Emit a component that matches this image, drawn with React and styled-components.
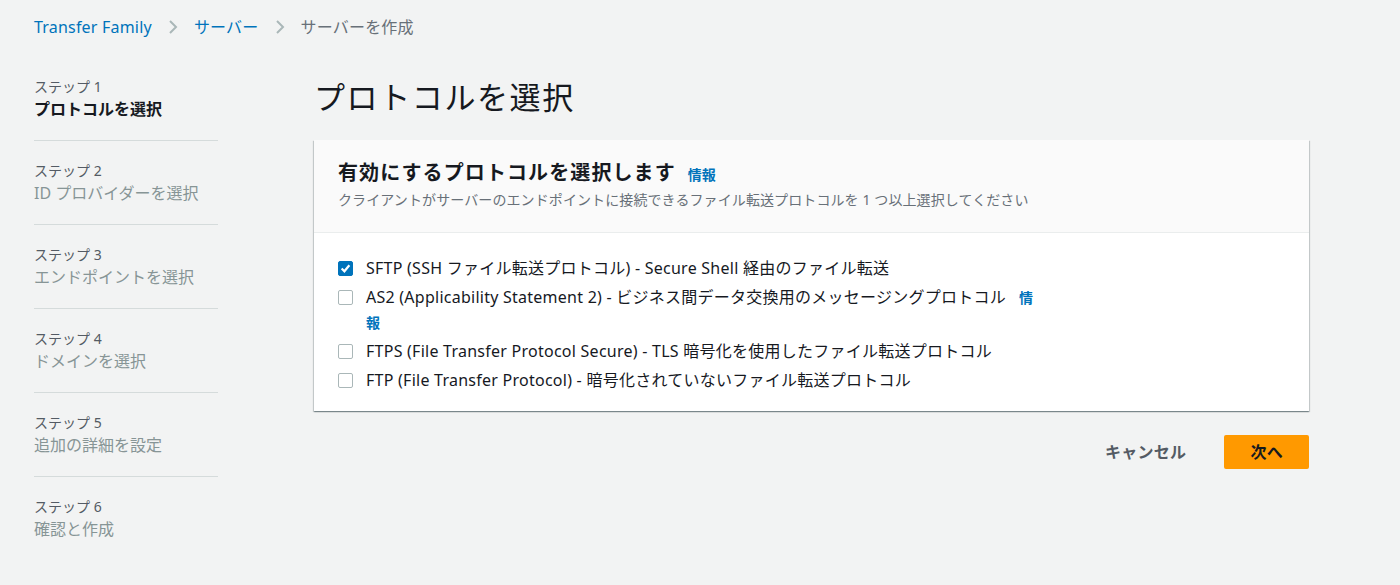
import React from "react";
import styled, { createGlobalStyle } from "styled-components";

const GlobalStyle = createGlobalStyle`
    html, body {
        margin: 0;
        padding: 0;
        background: #f2f3f3;
    }
    body {
        font-family: "Noto Sans", "Noto Sans CJK JP", sans-serif;
        color: #16191f;
        -webkit-font-smoothing: antialiased;
    }
`;

const Page = styled.div`
    min-height: 585px;
    background: #f2f3f3;
`;

const Breadcrumbs = styled.nav`
    display: flex;
    align-items: center;
    gap: 15px;
    padding: 16px 0 0 34px;
    height: 22px;
    font-size: 16px;
    line-height: 22px;
`;

const Crumb = styled.a`
    color: ${(p) => (p.$current ? "#687078" : "#0073bb")};
    text-decoration: none;
    white-space: nowrap;
    letter-spacing: 0.2px;
`;

const Layout = styled.div`
    display: grid;
    grid-template-columns: 184px 1fr;
    column-gap: 96px;
    padding: 19px 91px 0 34px;
`;

const StepList = styled.ol`
    list-style: none;
    margin: 0;
    padding: 0;
`;

const Step = styled.li`
    padding: 20px 0 19px;
    border-bottom: ${(p) => (p.$last ? "none" : "1px solid #d5dbdb")};
`;

const StepLabel = styled.div`
    font-size: 14px;
    line-height: 20px;
    color: #545b64;
`;

const StepTitle = styled.div`
    font-size: 16px;
    line-height: 24px;
    font-weight: ${(p) => (p.$active ? 700 : 400)};
    color: ${(p) => (p.$active ? "#16191f" : "#879596")};
    white-space: nowrap;
`;

const Main = styled.main`
    display: flex;
    flex-direction: column;
`;

const Heading = styled.h1`
    margin: 20px 0 23px 0;
    font-size: 31px;
    line-height: 40px;
    font-weight: 400;
    letter-spacing: 1.6px;
    color: #16191f;
`;

const Container = styled.section`
    background: #fff;
    box-shadow: 0 1px 1px 0 rgba(0, 28, 36, 0.3),
        1px 1px 1px 0 rgba(0, 28, 36, 0.15),
        -1px 1px 1px 0 rgba(0, 28, 36, 0.15);
`;

const ContainerHeader = styled.header`
    background: #fafafa;
    border-bottom: 1px solid #eaeded;
    padding: 19px 24px 22px;
`;

const HeaderTitle = styled.h2`
    margin: 0;
    font-size: 20px;
    line-height: 28px;
    font-weight: 700;
    letter-spacing: 1.1px;
    display: flex;
    align-items: baseline;
    gap: 12px;
`;

const InfoLink = styled.a`
    font-size: 14px;
    line-height: 16px;
    font-weight: 700;
    letter-spacing: 0;
    color: #0073bb;
    text-decoration: none;
    margin-left: ${(p) => p.$inset || "0"};
`;

const Description = styled.p`
    margin: 3px 0 0;
    font-size: 14px;
    line-height: 20px;
    color: #687078;
    letter-spacing: 0.1px;
`;

const ContainerBody = styled.div`
    padding: 23px 24px 18px;
    display: flex;
    flex-direction: column;
    gap: 4px;
`;

const Option = styled.label`
    display: flex;
    align-items: flex-start;
    font-size: 16px;
    line-height: 25px;
    color: #16191f;
    letter-spacing: 0.25px;
    cursor: pointer;
`;

const Box = styled.span`
    flex: none;
    width: 15px;
    height: 15px;
    margin: 5px 13px 0 0;
    box-sizing: border-box;
    border-radius: 2px;
    border: 1px solid ${(p) => (p.$checked ? "#0073bb" : "#aab7b8")};
    background: ${(p) => (p.$checked ? "#0073bb" : "#fff")};
    display: flex;
    align-items: center;
    justify-content: center;
`;

const OptionText = styled.span`
    max-width: 672px;
`;

const Actions = styled.div`
    display: flex;
    justify-content: flex-end;
    align-items: center;
    gap: 18px;
    margin-top: 24px;
`;

const Button = styled.button`
    font-family: inherit;
    font-size: 16px;
    line-height: 22px;
    font-weight: 700;
    letter-spacing: 0.3px;
    padding: 4px ${(p) => (p.$primary ? "24px" : "18px")};
    border-radius: 2px;
    border: 2px solid ${(p) => (p.$primary ? "#ff9900" : "transparent")};
    background: ${(p) => (p.$primary ? "#ff9900" : "transparent")};
    color: ${(p) => (p.$primary ? "#16191f" : "#545b64")};
    cursor: pointer;
`;

const Chevron = () => (
    <svg width="12" height="16" viewBox="0 0 12 16" aria-hidden="true">
        <polyline points="3,2 9,8 3,14" fill="none" stroke="#aab7b8" strokeWidth="2" />
    </svg>
);

const Check = () => (
    <svg width="11" height="11" viewBox="0 0 10 10" aria-hidden="true">
        <polyline points="1.5,5 4,7.5 8.5,2" fill="none" stroke="#fff" strokeWidth="2" />
    </svg>
);

const steps = [
    "プロトコルを選択",
    "ID プロバイダーを選択",
    "エンドポイントを選択",
    "ドメインを選択",
    "追加の詳細を設定",
    "確認と作成",
];

const options = [
    { text: "SFTP (SSH ファイル転送プロトコル) - Secure Shell 経由のファイル転送", checked: true },
    { text: "AS2 (Applicability Statement 2) - ビジネス間データ交換用のメッセージングプロトコル", info: true },
    { text: "FTPS (File Transfer Protocol Secure) - TLS 暗号化を使用したファイル転送プロトコル" },
    { text: "FTP (File Transfer Protocol) - 暗号化されていないファイル転送プロトコル" },
];

const App = () => {
    return (
        <Page>
            <GlobalStyle />
            <Breadcrumbs>
                <Crumb href="#">Transfer Family</Crumb>
                <Chevron />
                <Crumb href="#">サーバー</Crumb>
                <Chevron />
                <Crumb $current>サーバーを作成</Crumb>
            </Breadcrumbs>
            <Layout>
                <StepList>
                    {steps.map((title, i) => (
                        <Step key={title} $last={i === steps.length - 1}>
                            <StepLabel>ステップ {i + 1}</StepLabel>
                            <StepTitle $active={i === 0}>{title}</StepTitle>
                        </Step>
                    ))}
                </StepList>
                <Main>
                    <Heading>プロトコルを選択</Heading>
                    <Container>
                        <ContainerHeader>
                            <HeaderTitle>
                                有効にするプロトコルを選択します
                                <InfoLink href="#">情報</InfoLink>
                            </HeaderTitle>
                            <Description>
                                クライアントがサーバーのエンドポイントに接続できるファイル転送プロトコルを 1 つ以上選択してください
                            </Description>
                        </ContainerHeader>
                        <ContainerBody>
                            {options.map((o) => (
                                <Option key={o.text}>
                                    <Box $checked={o.checked}>{o.checked && <Check />}</Box>
                                    <OptionText>
                                        {o.text}
                                        {o.info && <InfoLink href="#" $inset="13px">情報</InfoLink>}
                                    </OptionText>
                                </Option>
                            ))}
                        </ContainerBody>
                    </Container>
                    <Actions>
                        <Button>キャンセル</Button>
                        <Button $primary>次へ</Button>
                    </Actions>
                </Main>
            </Layout>
        </Page>
    );
};

export default App;
